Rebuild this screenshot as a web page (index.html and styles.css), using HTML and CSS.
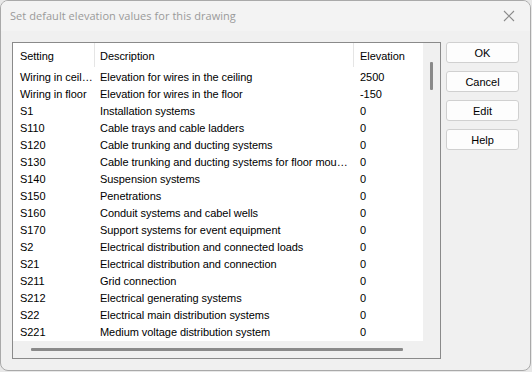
FILE: index.html
```html
<!DOCTYPE html>
<html>
<head>
<meta charset="utf-8">
<link rel="stylesheet" href="styles.css">
</head>
<body>
<div class="window">
  <div class="titlebar">
    <span class="title">Set default elevation values for this drawing</span>
    <svg class="close" width="12" height="12" viewBox="0 0 12 12"><path d="M1 1 L11 11 M11 1 L1 11" stroke="#8c8c8c" stroke-width="1.1" fill="none"/></svg>
  </div>
  <div class="body">
    <div class="listbox">
      <div class="listmain">
        <div class="listarea">
          <div class="row header">
            <div class="c c1">Setting</div>
            <div class="c c2">Description</div>
            <div class="c c3">Elevation</div>
          </div>
          <div class="row"><div class="c c1">Wiring in ceiling</div><div class="c c2">Elevation for wires in the ceiling</div><div class="c c3">2500</div></div>
          <div class="row"><div class="c c1">Wiring in floor</div><div class="c c2">Elevation for wires in the floor</div><div class="c c3">-150</div></div>
          <div class="row"><div class="c c1">S1</div><div class="c c2">Installation systems</div><div class="c c3">0</div></div>
          <div class="row"><div class="c c1">S110</div><div class="c c2">Cable trays and cable ladders</div><div class="c c3">0</div></div>
          <div class="row"><div class="c c1">S120</div><div class="c c2">Cable trunking and ducting systems</div><div class="c c3">0</div></div>
          <div class="row"><div class="c c1">S130</div><div class="c c2">Cable trunking and ducting systems for floor mounting</div><div class="c c3">0</div></div>
          <div class="row"><div class="c c1">S140</div><div class="c c2">Suspension systems</div><div class="c c3">0</div></div>
          <div class="row"><div class="c c1">S150</div><div class="c c2">Penetrations</div><div class="c c3">0</div></div>
          <div class="row"><div class="c c1">S160</div><div class="c c2">Conduit systems and cabel wells</div><div class="c c3">0</div></div>
          <div class="row"><div class="c c1">S170</div><div class="c c2">Support systems for event equipment</div><div class="c c3">0</div></div>
          <div class="row"><div class="c c1">S2</div><div class="c c2">Electrical distribution and connected loads</div><div class="c c3">0</div></div>
          <div class="row"><div class="c c1">S21</div><div class="c c2">Electrical distribution and connection</div><div class="c c3">0</div></div>
          <div class="row"><div class="c c1">S211</div><div class="c c2">Grid connection</div><div class="c c3">0</div></div>
          <div class="row"><div class="c c1">S212</div><div class="c c2">Electrical generating systems</div><div class="c c3">0</div></div>
          <div class="row"><div class="c c1">S22</div><div class="c c2">Electrical main distribution systems</div><div class="c c3">0</div></div>
          <div class="row"><div class="c c1">S221</div><div class="c c2">Medium voltage distribution system</div><div class="c c3">0</div></div>
        </div>
        <div class="vscroll"><div class="vthumb"></div></div>
      </div>
      <div class="hscroll"><div class="hthumb"></div></div>
    </div>
    <div class="buttons">
      <button class="btn">OK</button>
      <button class="btn">Cancel</button>
      <button class="btn">Edit</button>
      <button class="btn">Help</button>
    </div>
  </div>
</div>
</body>
</html>
```

FILE: styles.css
```css
html, body {
  margin: 0;
  padding: 0;
  background: #e8e8e8;
}
.window {
  width: 529px;
  height: 369px;
  border: 1px solid #a9a9a9;
  border-radius: 8px;
  background: #f0f0f0;
  overflow: hidden;
  display: flex;
  flex-direction: column;
}
.titlebar {
  height: 30px;
  background: #f3f3f3;
  display: flex;
  align-items: center;
  justify-content: space-between;
  padding: 0 15px 0 9px;
  flex: none;
}
.title {
  font-family: "Open Sans", "Noto Sans", sans-serif;
  font-size: 11px;
  letter-spacing: 0.05px;
  color: #9a9a9a;
  padding-bottom: 2px;
}
.close {
  margin-bottom: 1px;
}
.body {
  display: flex;
  align-items: flex-start;
  padding: 11px 0 0 11px;
  gap: 5px;
}
.listbox {
  width: 427px;
  height: 315px;
  border: 1px solid #8a8a8a;
  background: #f0f0f0;
  display: flex;
  flex-direction: column;
}
.listmain {
  display: flex;
  height: 298px;
}
.listarea {
  width: 410px;
  background: #fff;
  font-family: "Liberation Sans", Arial, sans-serif;
  font-size: 11px;
  letter-spacing: -0.05px;
  color: #000;
}
.row {
  display: flex;
  height: 17px;
}
.row.header {
  height: 25px;
}
.c {
  white-space: nowrap;
  overflow: hidden;
  text-overflow: ellipsis;
  box-sizing: border-box;
  height: 17px;
  padding-top: 2px;
  line-height: 15px;
}
.c1 { width: 82px; padding-left: 7px; padding-right: 1px; }
.c2 { width: 259px; padding-left: 5px; padding-right: 6px; }
.c3 { width: 69px; padding-left: 6px; }
.header .c {
  height: 24px;
  padding-top: 2px;
  line-height: 23px;
}
.header .c1, .header .c2 {
  border-right: 1px solid #e5e5e5;
}
.vscroll {
  width: 17px;
  background: #f0f0f0;
}
.vthumb {
  margin: 19px 0 0 7px;
  width: 3px;
  height: 28px;
  background: #8a8a8a;
  border-radius: 1px;
}
.hscroll {
  height: 17px;
  background: #f0f0f0;
}
.hthumb {
  margin: 7px 0 0 18px;
  width: 372px;
  height: 3px;
  background: #8a8a8a;
  border-radius: 1px;
}
.buttons {
  display: flex;
  flex-direction: column;
  gap: 8px;
}
.btn {
  width: 73px;
  height: 21px;
  border: 1px solid #d0d0d0;
  border-radius: 3px;
  background: #fdfdfd;
  font-family: "Liberation Sans", Arial, sans-serif;
  font-size: 11px;
  color: #000;
  padding: 0;
  margin: 0;
}
```
